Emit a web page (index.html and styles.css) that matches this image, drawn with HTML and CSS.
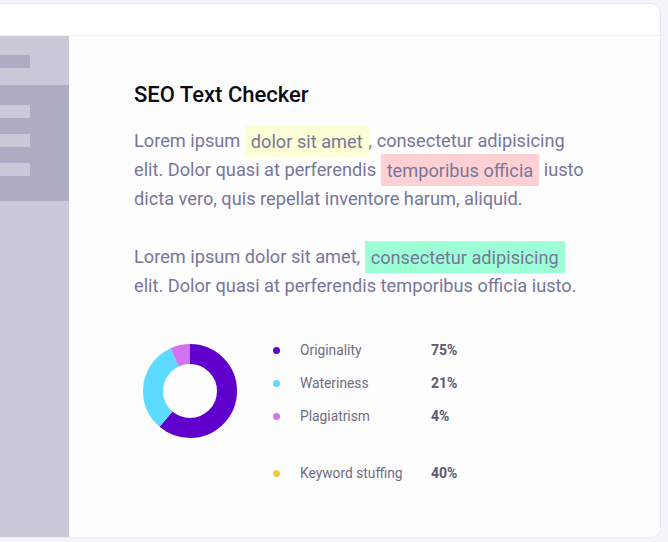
FILE: index.html
```html
<!DOCTYPE html>
<html>
<head>
<meta charset="utf-8">
<link rel="stylesheet" href="styles.css">
</head>
<body>
<div class="page">
  <div class="card">
    <div class="card-header"></div>
    <div class="card-body">
      <aside class="sidebar">
        <div class="side-top">
          <span class="bar bar-dark"></span>
        </div>
        <div class="side-active">
          <span class="bar bar-light"></span>
          <span class="bar bar-light"></span>
          <span class="bar bar-light"></span>
        </div>
      </aside>
      <main class="main">
        <h1 class="title">SEO Text Checker</h1>
        <p class="text">Lorem ipsum <span class="hl hl-yellow">dolor sit amet</span>, consectetur adipisicing elit. Dolor quasi at perferendis <span class="hl hl-pink">temporibus officia</span> iusto dicta vero, quis repellat inventore harum, aliquid.</p>
        <p class="text">Lorem ipsum dolor sit amet, <span class="hl hl-green">consectetur adipisicing</span> elit. Dolor quasi at perferendis temporibus officia iusto.</p>
        <div class="chart">
          <svg class="donut" width="94" height="94" viewBox="0 0 94 94">
            <g transform="rotate(-90 47 47)" fill="none" stroke-width="20">
              <circle cx="47" cy="47" r="37" stroke="#6000cc" stroke-dasharray="142.07 232.48" stroke-dashoffset="0"/>
              <circle cx="47" cy="47" r="37" stroke="#5ddaff" stroke-dasharray="74.27 232.48" stroke-dashoffset="-142.07"/>
              <circle cx="47" cy="47" r="37" stroke="#d273f0" stroke-dasharray="16.14 232.48" stroke-dashoffset="-216.34"/>
            </g>
          </svg>
          <ul class="legend">
            <li class="legend-row"><span class="dot dot-purple"></span><span class="label">Originality</span><span class="value">75%</span></li>
            <li class="legend-row"><span class="dot dot-cyan"></span><span class="label">Wateriness</span><span class="value">21%</span></li>
            <li class="legend-row"><span class="dot dot-pink"></span><span class="label">Plagiatrism</span><span class="value">4%</span></li>
            <li class="legend-row legend-row-sep"><span class="dot dot-yellow"></span><span class="label">Keyword stuffing</span><span class="value">40%</span></li>
          </ul>
        </div>
      </main>
    </div>
  </div>
</div>
</body>
</html>
```
FILE: styles.css
```css
html, body {
  margin: 0;
  padding: 0;
}
body {
  background: #f5f4fa;
  font-family: Roboto, "Noto Sans", sans-serif;
  width: 668px;
  height: 542px;
  overflow: hidden;
}
.page {
  padding-top: 3px;
}
.card {
  width: 660px;
  height: 533px;
  background: #ffffff;
  border: 1px solid #e9e8f1;
  border-left: none;
  border-radius: 0 10px 10px 0;
  display: flex;
  flex-direction: column;
  overflow: hidden;
}
.card-header {
  height: 31px;
  border-bottom: 1px solid #efeef5;
  flex: none;
}
.card-body {
  flex: 1;
  display: flex;
}
.sidebar {
  width: 69px;
  background: #c9c9d7;
  flex: none;
}
.side-top {
  height: 49px;
  padding-top: 19px;
  box-sizing: border-box;
}
.side-active {
  background: #adacc5;
  height: 116px;
  padding-top: 20px;
  box-sizing: border-box;
  display: flex;
  flex-direction: column;
  gap: 16px;
}
.bar {
  display: block;
  width: 30px;
  height: 13px;
}
.bar-dark {
  background: #adacc5;
}
.bar-light {
  background: #c9c9d7;
}
.main {
  flex: 1;
  background: #fdfdfe;
  padding: 46px 0 0 65px;
}
.title {
  margin: 0 0 18px;
  font-size: 22px;
  line-height: 26px;
  font-weight: 500;
  color: #0c0c14;
}
.text {
  margin: 0 0 29px;
  width: 458px;
  font-size: 18.2px;
  line-height: 29px;
  color: #77769a;
}
.text:last-of-type {
  margin-bottom: 0;
}
.hl {
  padding: 5.5px 6px;
}
.hl-yellow {
  background: #fdfdd6;
}
.hl-pink {
  background: #ffd1d5;
}
.hl-green {
  background: #9dffd6;
}
.chart {
  margin-top: 40px;
  margin-left: 9px;
  display: flex;
  align-items: flex-start;
}
.donut {
  display: block;
  margin-top: 4px;
  flex: none;
}
.legend {
  list-style: none;
  margin: 0 0 0 36px;
  padding: 0;
  display: flex;
  flex-direction: column;
  gap: 13px;
}
.legend-row {
  display: flex;
  align-items: center;
  height: 20px;
  font-size: 13.8px;
}
.legend-row-sep {
  margin-top: 24px;
}
.dot {
  width: 7px;
  height: 7px;
  border-radius: 50%;
  margin-right: 20px;
  flex: none;
}
.dot-purple { background: #6000cc; }
.dot-cyan { background: #5ddaff; }
.dot-pink { background: #d273f0; }
.dot-yellow { background: #f5c842; }
.label {
  width: 131px;
  color: #6e6d82;
}
.value {
  font-weight: 700;
  font-size: 14px;
  color: #5b5a6e;
}
```
